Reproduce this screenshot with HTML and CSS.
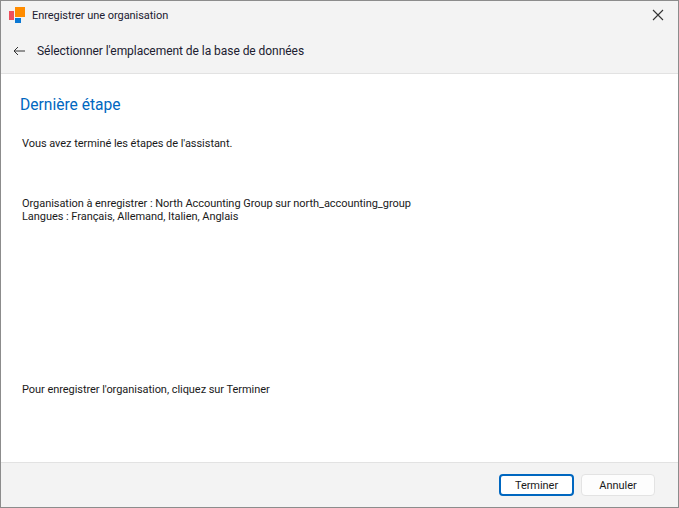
FILE: index.html
```html
<!DOCTYPE html>
<html lang="fr">
<head>
<meta charset="utf-8">
<title>Enregistrer une organisation</title>
<link rel="stylesheet" href="styles.css">
</head>
<body>
<div class="window">
  <header class="head">
    <div class="titlebar">
      <svg class="logo" width="24" height="24" viewBox="0 0 24 24">
        <rect x="0" y="5" width="5" height="9" fill="#ee4f5d"/>
        <rect x="6" y="1" width="10" height="10" fill="#ff8c00"/>
        <rect x="6" y="12" width="6" height="5" fill="#0a78d4"/>
      </svg>
      <span class="title">Enregistrer une organisation</span>
      <svg class="close" width="12" height="12" viewBox="0 0 12 12">
        <path d="M1 1L11 11M11 1L1 11" stroke="#333" stroke-width="1.1" fill="none"/>
      </svg>
    </div>
    <div class="navbar">
      <svg class="back" width="12" height="10" viewBox="0 0 12 10">
        <path d="M12 5H1M5 1L1 5L5 9" stroke="#333" stroke-width="1" fill="none"/>
      </svg>
      <span class="nav-title">Sélectionner l'emplacement de la base de données</span>
    </div>
  </header>
  <main class="content">
    <h1 class="heading">Dernière étape</h1>
    <div class="body-text">
      <p class="intro">Vous avez terminé les étapes de l'assistant.</p>
      <p class="summary">Organisation à enregistrer : North Accounting Group sur north_accounting_group<br>Langues : Français, Allemand, Italien, Anglais</p>
      <p class="hint">Pour enregistrer l'organisation, cliquez sur Terminer</p>
    </div>
  </main>
  <footer class="foot">
    <button class="btn btn-primary">Terminer</button>
    <button class="btn">Annuler</button>
  </footer>
</div>
</body>
</html>
```

FILE: styles.css
```css
* { box-sizing: border-box; }
html, body { margin: 0; height: 100%; }
body { font-family: Roboto, "Open Sans", sans-serif; font-size: 11px; letter-spacing: -0.05px; color: #1a1a1a; }
.window {
  width: 679px; height: 508px;
  display: flex; flex-direction: column;
  border: 1px solid #8c8c8c;
  background: #fff;
}
.head { background: #f3f3f3; border-bottom: 1px solid #e2e2e2; height: 73px; flex: none; }
.titlebar { display: flex; align-items: center; height: 28px; padding: 0 14px 0 8px; }
.logo { flex: none; align-self: flex-start; margin-top: 5px; }
.title { flex: 1; margin-left: -1px; color: #202030; }
.navbar { display: flex; align-items: center; height: 44px; padding: 0 0 0 12px; }
.nav-title { margin-left: 12px; font-size: 12px; color: #202030; }
.content { flex: 1; padding: 20px 22px 0 21px; display: flex; flex-direction: column; }
.heading { margin: 0 0 0 -2px; font-size: 15.6px; font-weight: 400; letter-spacing: 0; line-height: 22px; color: #0067c0; }
.body-text { flex: 1; display: flex; flex-direction: column; line-height: 13px; }
.body-text p { margin: 0; }
.intro { margin-top: 21px !important; }
.summary { margin-top: 47px !important; }
.hint { margin-top: auto !important; margin-bottom: 66px !important; }
.foot {
  height: 45px; flex: none;
  display: flex; justify-content: flex-end; align-items: center; gap: 7px;
  padding: 0 23px 0 0;
  background: #f3f3f3; border-top: 1px solid #e2e2e2;
}
.btn {
  width: 74px; height: 22px; padding: 0;
  font: inherit; letter-spacing: inherit; color: #1a1a1a;
  background: #fdfdfd; border: 1px solid #e3e3e3; border-radius: 4px;
}
.btn-primary { width: 75px; border: 2px solid #0067c0; background: #fff; }
```
